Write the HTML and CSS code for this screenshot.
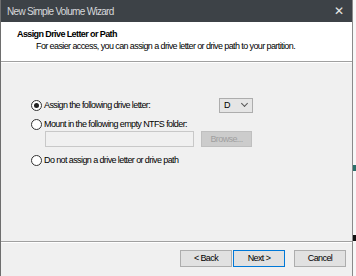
FILE: index.html
```html
<!DOCTYPE html>
<html lang="en">
<head>
    <meta charset="UTF-8">
    <title>New Simple Volume Wizard</title>
    <link rel="stylesheet" href="styles.css">
</head>
<body>
    <div class="screen">
        <div class="wizard">
            <div class="title-bar">
                <span class="title">New Simple Volume Wizard</span>
                <span class="close">&#x2715;</span>
            </div>
            <div class="page-header">
                <div class="page-title">Assign Drive Letter or Path</div>
                <div class="page-subtitle">For easier access, you can assign a drive letter or drive path to your partition.</div>
            </div>
            <div class="page-body">
                <div class="row first">
                    <label class="option"><span class="radio checked"></span>Assign the following drive letter:</label>
                    <div class="select">D<span class="chevron"></span></div>
                </div>
                <div class="row">
                    <label class="option"><span class="radio"></span>Mount in the following empty NTFS folder:</label>
                </div>
                <div class="row folder-row">
                    <div class="textbox"></div>
                    <button class="btn disabled">Browse...</button>
                </div>
                <div class="row">
                    <label class="option"><span class="radio"></span>Do not assign a drive letter or drive path</label>
                </div>
            </div>
            <div class="page-footer">
                <button class="btn">&lt; Back</button>
                <button class="btn default">Next &gt;</button>
                <button class="btn cancel">Cancel</button>
            </div>
        </div>
        <div class="desktop">
            <div class="teal"></div>
            <div class="dark"></div>
        </div>
    </div>
</body>
</html>
```

FILE: styles.css
```css
body {
    margin: 0;
    font-family: 'Liberation Sans Narrow', 'Liberation Sans', Arial, sans-serif;
    font-size: 9px;
    letter-spacing: -0.6px;
    color: #000;
    background: #f4f4f4;
}
.screen {
    display: flex;
    width: 356px;
    height: 276px;
    overflow: hidden;
}
.wizard {
    width: 351px;
    height: 276px;
    display: flex;
    flex-direction: column;
    border-left: 1px solid #6e6e6e;
    border-right: 1px solid #8a8a8a;
    background: #f0f0f0;
}
.title-bar {
    height: 22px;
    background: #3d4247;
    color: #d6d8da;
    display: flex;
    align-items: center;
    justify-content: space-between;
    padding: 0 8px 0 6px;
    font-size: 10px;
    letter-spacing: -0.7px;
}
.close {
    font-family: 'DejaVu Sans', sans-serif;
    font-size: 12px;
    letter-spacing: 0;
    color: #e8e8e8;
}
.page-header {
    height: 40px;
    background: #fff;
    border-bottom: 1px solid #a0a0a0;
    box-shadow: 0 1px 0 #fff;
    padding: 7px 0 0 16px;
    box-sizing: border-box;
}
.page-title {
    font-weight: bold;
    margin-bottom: 2px;
}
.page-subtitle {
    padding-left: 19px;
}
.page-body {
    flex: 1;
    padding: 36px 0 0 30px;
    border-bottom: 1px solid #a0a0a0;
    box-shadow: 0 1px 0 #fff;
}
.row {
    display: flex;
    align-items: center;
    height: 14px;
}
.row.first {
    margin-bottom: 5px;
}
.option {
    display: flex;
    align-items: center;
    flex: 0 0 188px;
}
.radio {
    width: 11px;
    height: 11px;
    border: 1px solid #333;
    border-radius: 50%;
    background: #fff;
    box-sizing: border-box;
    margin-right: 2px;
    position: relative;
}
.radio.checked::after {
    content: "";
    position: absolute;
    left: 2px;
    top: 2px;
    width: 5px;
    height: 5px;
    border-radius: 50%;
    background: #222;
}
.select {
    width: 34px;
    height: 15px;
    border: 1px solid #adadad;
    background: #e5e5e5;
    box-sizing: border-box;
    padding-left: 4px;
    display: flex;
    align-items: center;
    justify-content: space-between;
}
.chevron {
    width: 4px;
    height: 4px;
    border-right: 1px solid #555;
    border-bottom: 1px solid #555;
    transform: rotate(45deg);
    margin: 0 5px 3px 0;
}
.folder-row {
    height: 16px;
    padding-left: 14px;
    margin-bottom: 6px;
}
.textbox {
    width: 149px;
    height: 16px;
    border: 1px solid #c8c8c8;
    background: #f0f0f0;
    box-sizing: border-box;
    margin-right: 7px;
}
.btn {
    font-family: inherit;
    font-size: 9px;
    letter-spacing: inherit;
    height: 17px;
    padding: 0;
    border: 1px solid #adadad;
    background: #e1e1e1;
    color: #000;
}
.btn.disabled {
    width: 51px;
    height: 16px;
    color: #a0a0a0;
    background: #cccccc;
    border-color: #bfbfbf;
}
.page-footer {
    height: 34px;
    display: flex;
    align-items: center;
    justify-content: flex-end;
    padding: 0 6px 2px 0;
    box-sizing: border-box;
}
.page-footer .btn {
    width: 52px;
}
.page-footer .btn.default {
    border-color: #0078d7;
    margin-left: 1px;
}
.page-footer .btn.cancel {
    margin-left: 9px;
}
.desktop {
    flex: 1;
    display: flex;
    flex-direction: column;
    background: #f7f7f7;
}
.teal {
    height: 6px;
    margin-top: 165px;
    background: #2b6f6a;
}
.dark {
    height: 6px;
    margin-top: 64px;
    background: #111;
}
```
